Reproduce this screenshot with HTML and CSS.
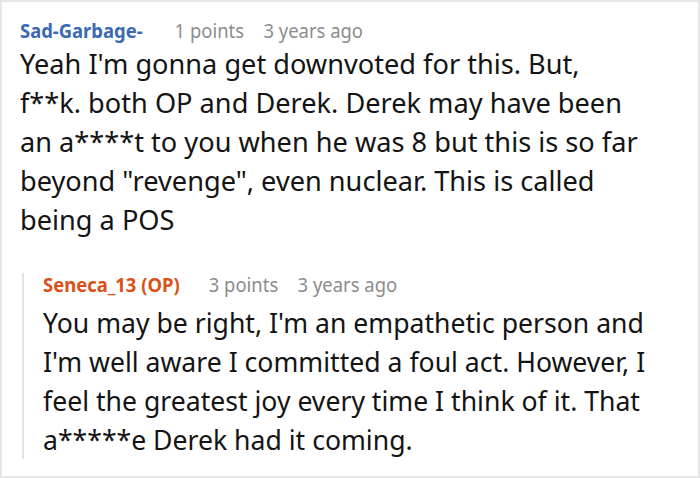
FILE: index.html
```html
<!DOCTYPE html>
<html>
<head>
<meta charset="utf-8">
<link rel="stylesheet" href="styles.css">
</head>
<body>
<div class="frame">
  <div class="comment">
    <div class="meta">
      <span class="author author-blue">Sad-Garbage-</span>
      <span class="info">1 points</span>
      <span class="info">3 years ago</span>
    </div>
    <p class="text">Yeah I'm gonna get downvoted for this. But,<br>f**k. both OP and Derek. Derek may have been<br>an a****t to you when he was 8 but this is so far<br>beyond "revenge", even nuclear. This is called<br>being a POS</p>
    <div class="reply">
      <div class="meta">
        <span class="author author-op">Seneca_13 (OP)</span>
        <span class="info">3 points</span>
        <span class="info">3 years ago</span>
      </div>
      <p class="text">You may be right, I'm an empathetic person and<br>I'm well aware I committed a foul act. However, I<br>feel the greatest joy every time I think of it. That<br>a*****e Derek had it coming.</p>
    </div>
  </div>
</div>
</body>
</html>
```
FILE: styles.css
```css
html, body {
  margin: 0;
  padding: 0;
  background: #ffffff;
}
.frame {
  width: 700px;
  height: 478px;
  box-sizing: border-box;
  border: 2px solid #e6e6e6;
  background: #fff;
  font-family: "Noto Sans", "DejaVu Sans", sans-serif;
  overflow: hidden;
}
.comment {
  padding: 17px 0 0 18px;
}
.meta {
  display: flex;
  align-items: baseline;
  font-size: 19px;
  line-height: 24px;
  white-space: nowrap;
  transform: scaleX(0.97);
  transform-origin: left center;
}
.author {
  font-weight: 700;
  margin-right: 33px;
}
.author-blue { color: #3b69b3; }
.author-op { color: #d95118; }
.info {
  color: #8c8c8c;
  margin-right: 20px;
}
.text {
  margin: 1px 0 0 0;
  font-size: 28px;
  line-height: 39px;
  color: #141414;
  white-space: nowrap;
  transform: scaleX(0.97);
  transform-origin: left center;
}
.reply {
  margin-top: 44px;
  margin-left: 2px;
  border-left: 2px solid #e3e3e3;
  padding: 0 0 0 19px;
}
.reply .meta {
  margin-top: -10px;
}
.reply .author {
  margin-right: 30px;
}
.reply .text {
  margin-top: 6px;
  transform: scaleX(0.95);
}
```
